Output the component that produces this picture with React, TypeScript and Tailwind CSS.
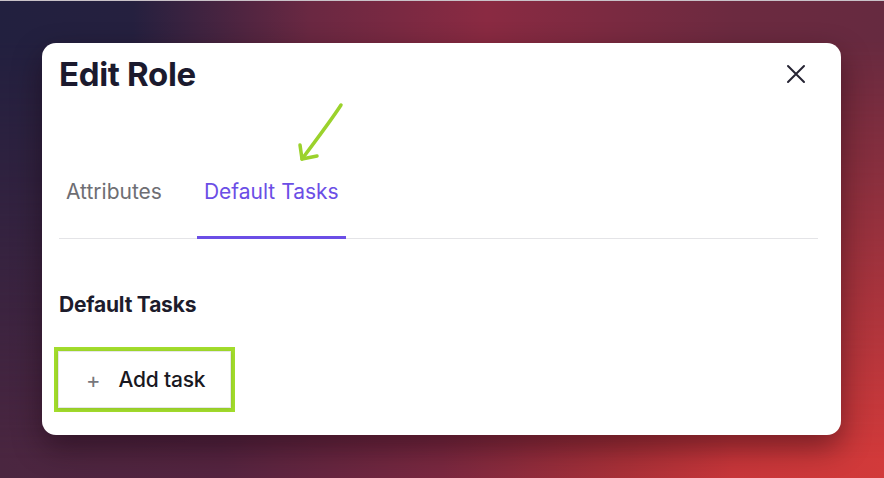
import React, { useState } from 'react';

const tabs = ['Attributes', 'Default Tasks'];

function CloseIcon() {
  return (
    <svg width="20" height="20" viewBox="0 0 20 20" fill="none" stroke="#262433" strokeWidth="2" strokeLinecap="round">
      <path d="M2 2L18 18M18 2L2 18" />
    </svg>
  );
}

function HintArrow() {
  return (
    <svg
      className="absolute left-[250px] top-[55px] pointer-events-none"
      width="60"
      height="70"
      viewBox="0 0 60 70"
      fill="none"
      stroke="#9bd22c"
      strokeWidth="3.5"
      strokeLinecap="round"
      strokeLinejoin="round"
    >
      <path d="M49 7C40 21 28 37 10 61" />
      <path d="M8 47L10 61L25 58" />
    </svg>
  );
}

export default function App() {
  const [active, setActive] = useState('Default Tasks');

  return (
    <div className="relative w-[884px] h-[478px] overflow-hidden border-t border-[#c9c2c8] bg-[linear-gradient(90deg,#4a2640_0%,#552440_25%,#7a2840_50%,#a83038_70%,#c8363a_83%,#d23a3a_100%)] font-['Inter',sans-serif] before:absolute before:inset-0 before:content-[''] before:bg-[linear-gradient(90deg,#22203f_0%,#25203f_15%,#6a2842_35%,#8a2a42_55%,#6c2a40_83%,#662a40_100%)] before:[mask-image:linear-gradient(to_bottom,#000_0%,#000_8%,transparent_96%)]">
      <div className="relative z-10 ml-[42px] mt-[42px] w-[799px] h-[392px] rounded-[14px] bg-white pl-[17px] pr-[23px] shadow-[0_12px_30px_rgba(20,0,10,0.45)]">
        <HintArrow />

        <div className="flex items-center justify-between pt-[13px]">
          <h2 className="text-[33px] leading-[36px] font-bold tracking-[-0.01em] text-[#1b1a2e]">Edit Role</h2>
          <button type="button" className="mr-[12px] flex h-[20px] w-[20px] items-center justify-center">
            <CloseIcon />
          </button>
        </div>

        <div className="mt-[86px] flex gap-[28px] border-b border-[#e4e4e7]">
          {tabs.map(tab => (
            <button
              key={tab}
              type="button"
              onClick={() => setActive(tab)}
              className={
                tab === active
                  ? '-mb-px border-b-[3px] border-[#6b4ee6] px-[7px] pb-[30px] text-[21px] leading-[28px] text-[#6b4ee6]'
                  : '-mb-px border-b-[3px] border-transparent px-[7px] pb-[30px] text-[21px] leading-[28px] text-[#6e6e73]'
              }
            >
              {tab}
            </button>
          ))}
        </div>

        <h3 className="mt-[52px] text-[21px] leading-[28px] font-bold tracking-[-0.01em] text-[#1d1c2c]">Default Tasks</h3>

        <div className="mt-[28px] -ml-[5px] inline-block border-4 border-[#a2dc2c]">
          <button
            type="button"
            className="flex h-[57px] w-[173px] items-center gap-[18px] border border-[#e6e6ea] bg-white pl-[27px] shadow-[0_1px_4px_rgba(0,0,0,0.12)]"
          >
            <span className="text-[22px] leading-none text-[#77777c]">+</span>
            <span className="text-[21px] leading-[28px] font-medium tracking-[-0.01em] text-[#19181f]">Add task</span>
          </button>
        </div>
      </div>
    </div>
  );
}
